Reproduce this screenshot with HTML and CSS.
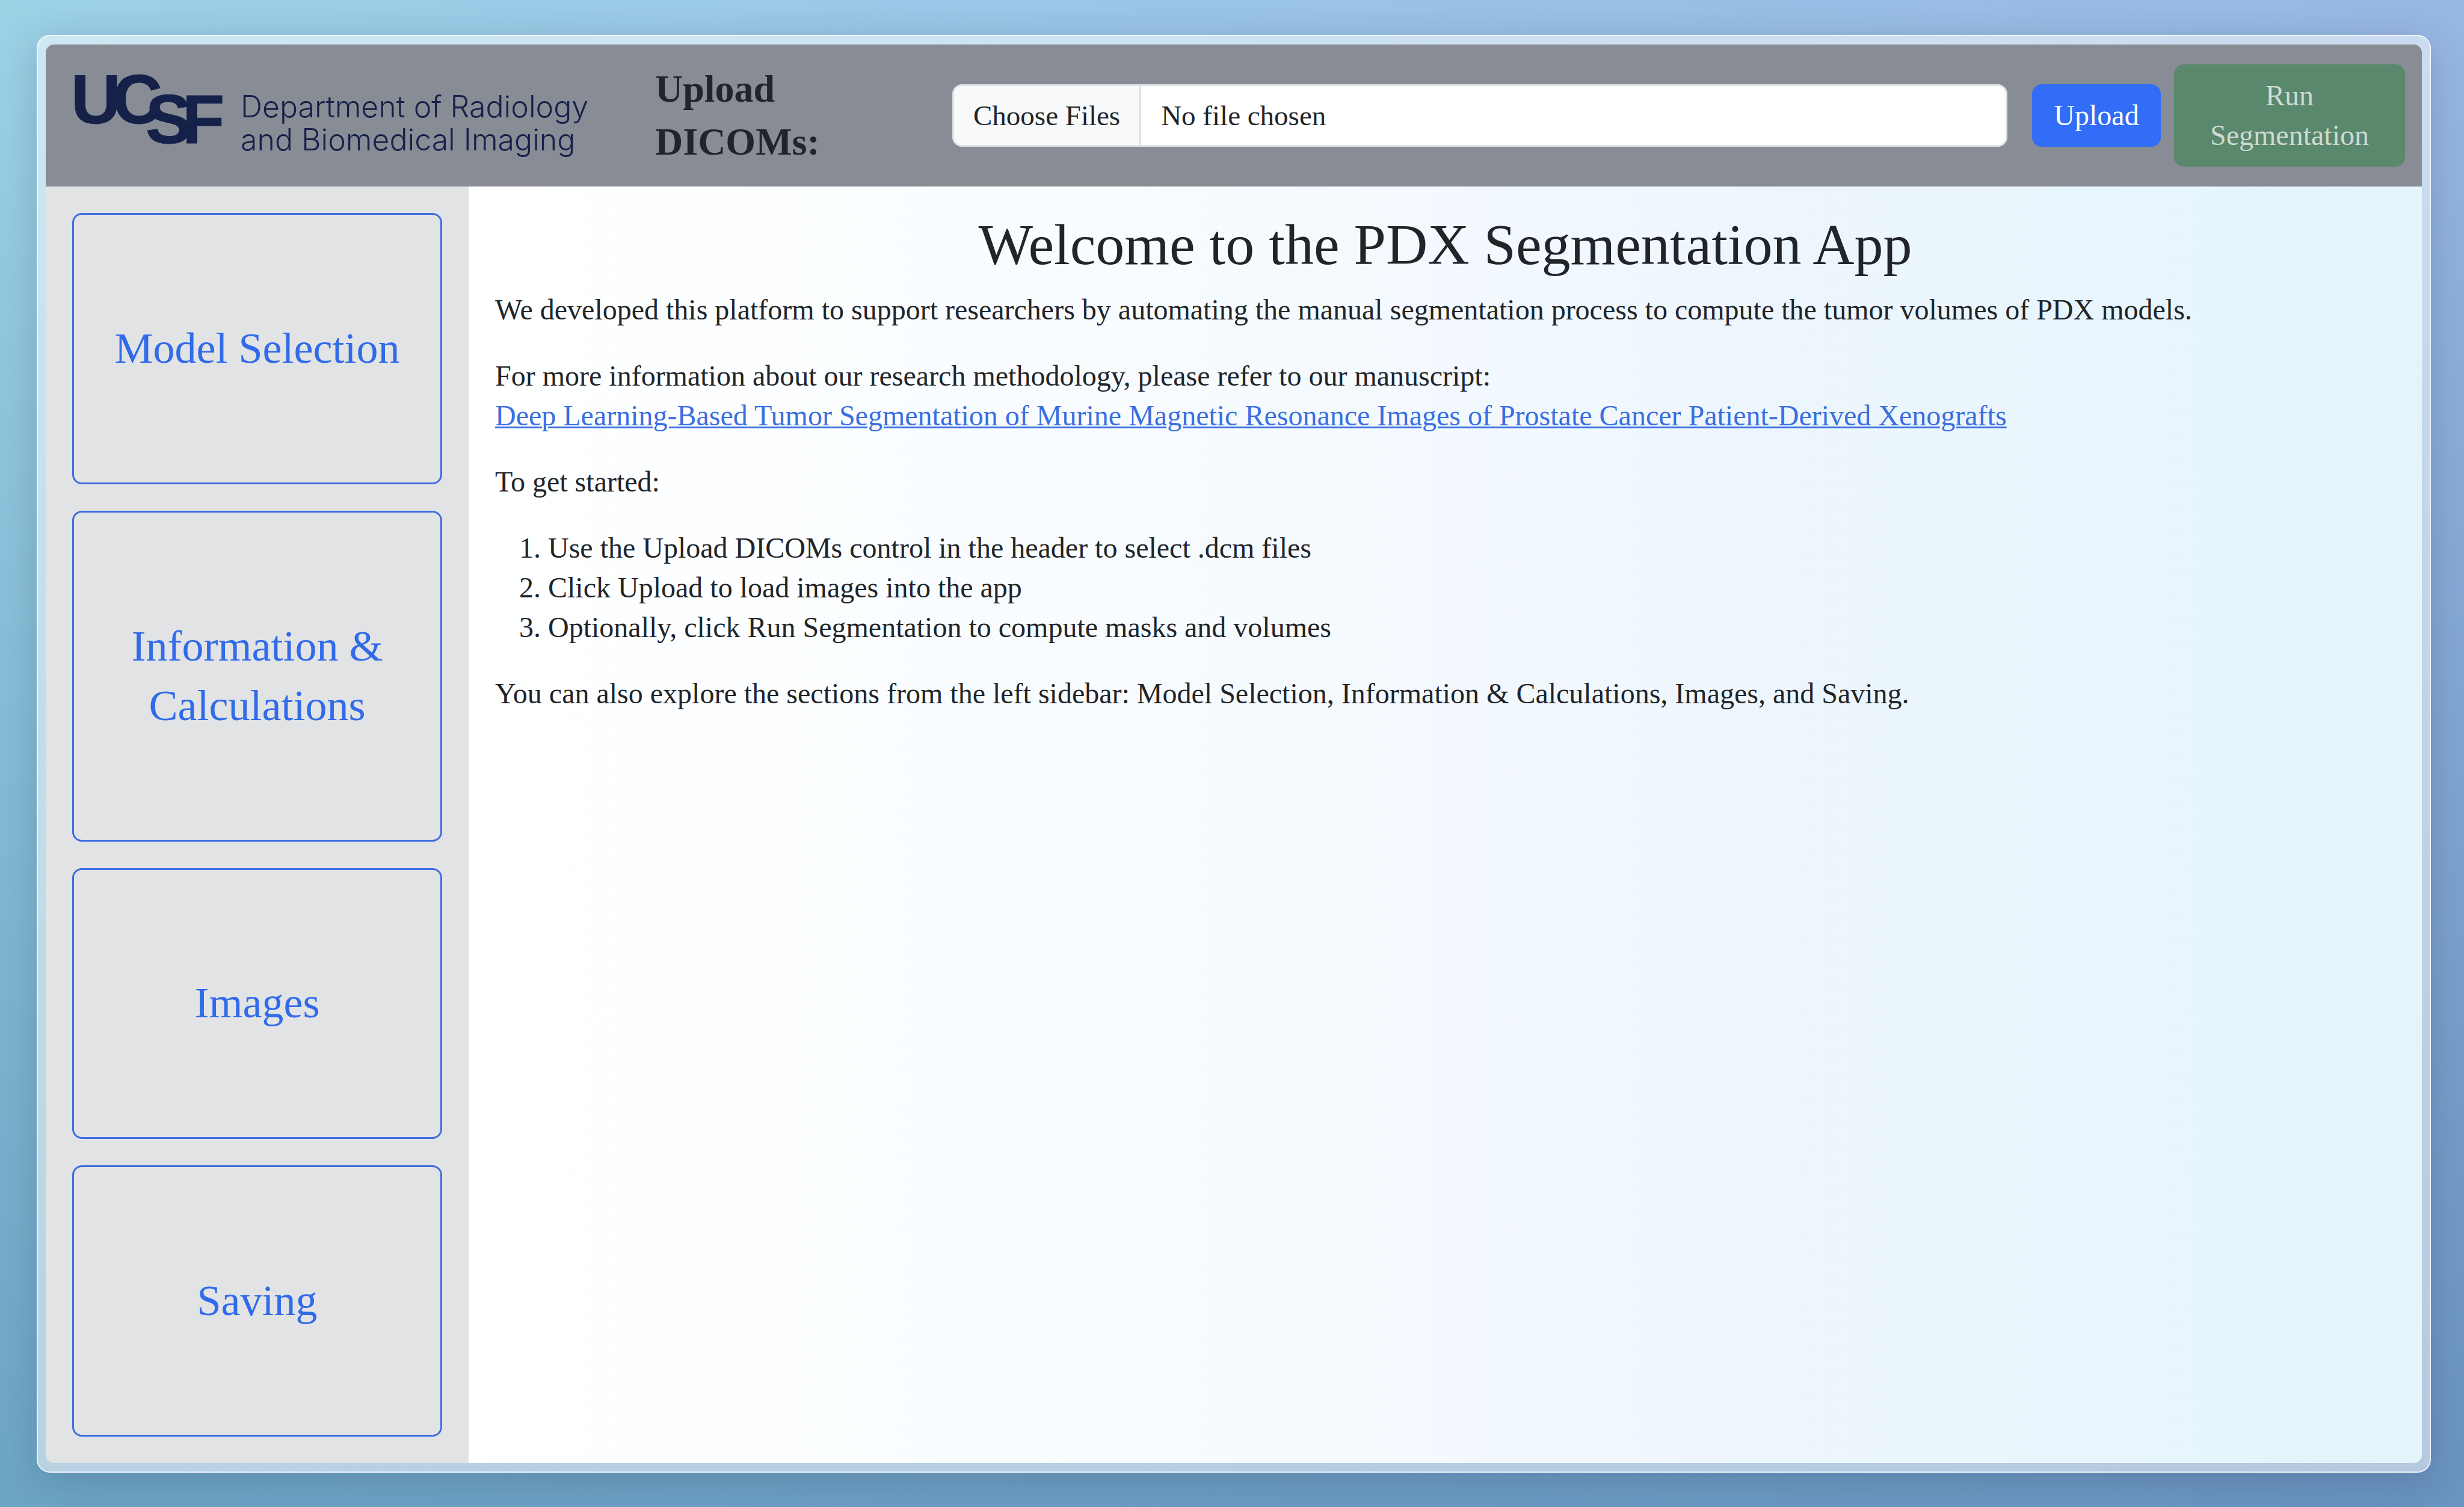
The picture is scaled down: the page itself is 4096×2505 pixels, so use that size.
FILE: index.html
```html
<!DOCTYPE html>
<html lang="en">
<head>
<meta charset="utf-8">
<title>PDX Segmentation App</title>
<link rel="stylesheet" href="styles.css">
</head>
<body>
<div class="frame">
  <div class="app">
    <header class="header">
      <svg class="logo" viewBox="-12 0 937 170" role="img" aria-label="UCSF Department of Radiology and Biomedical Imaging">
        <g class="logo-mark">
          <text x="-2" y="98">U</text>
          <text x="67" y="98">C</text>
          <text x="122" y="131">S</text>
          <text x="183" y="131">F</text>
        </g>
        <g class="logo-name">
          <text x="280" y="88">Department of Radiology</text>
          <text x="280" y="143">and Biomedical Imaging</text>
        </g>
      </svg>
      <form class="upload">
        <label class="upload-label" for="dicoms">Upload DICOMs:</label>
        <input class="upload-input" id="dicoms" type="file" multiple>
        <div class="actions">
          <button class="btn btn-primary" type="button">Upload</button>
          <button class="btn btn-success" type="button" disabled>Run Segmentation</button>
        </div>
      </form>
    </header>
    <nav class="sidebar">
      <button class="nav-btn" type="button">Model Selection</button>
      <button class="nav-btn" type="button">Information &amp; Calculations</button>
      <button class="nav-btn" type="button">Images</button>
      <button class="nav-btn" type="button">Saving</button>
    </nav>
    <main class="content">
      <h1>Welcome to the PDX Segmentation App</h1>
      <p>We developed this platform to support researchers by automating the manual segmentation process to compute the tumor volumes of PDX models.</p>
      <p>For more information about our research methodology, please refer to our manuscript:<br>
      <a href="#manuscript">Deep Learning-Based Tumor Segmentation of Murine Magnetic Resonance Images of Prostate Cancer Patient-Derived Xenografts</a></p>
      <p>To get started:</p>
      <ol>
        <li>Use the Upload DICOMs control in the header to select .dcm files</li>
        <li>Click Upload to load images into the app</li>
        <li>Optionally, click Run Segmentation to compute masks and volumes</li>
      </ol>
      <p>You can also explore the sections from the left sidebar: Model Selection, Information &amp; Calculations, Images, and Saving.</p>
    </main>
  </div>
</div>
</body>
</html>
```
FILE: styles.css
```css
* {
  box-sizing: border-box;
}

body {
  margin: 0;
  min-height: 100vh;
  display: flex;
  padding: 58px 55px 57px 61px;
  font-family: Georgia, "Liberation Serif", serif;
  font-size: 48px;
  line-height: 66px;
  color: #212529;
  background:
    linear-gradient(to bottom, rgba(0, 75, 115, 0), rgba(0, 75, 115, 0.3)),
    linear-gradient(110deg, #9cd2e6, #9bc8e8 30%, #97b2e2);
}

.frame {
  flex: 1;
  display: flex;
  padding: 14px 13px;
  border: 2px solid rgba(255, 255, 255, 0.7);
  border-radius: 22px;
  background: rgba(255, 255, 255, 0.5);
  box-shadow: 0 12px 64px rgba(31, 38, 60, 0.2);
}

.app {
  flex: 1;
  display: grid;
  grid-template-columns: 703px 1fr;
  grid-template-rows: auto 1fr;
  border-radius: 14px;
  overflow: hidden;
}

.header {
  grid-column: 1 / -1;
  display: flex;
  align-items: center;
  gap: 44px;
  padding: 30px 28px 30px 32px;
  background: #888c95;
}

.logo {
  flex: none;
  width: 937px;
  height: 170px;
  fill: #16214a;
}

.logo-mark {
  font: bold 115px "Liberation Sans", Arial, sans-serif;
  stroke: #16214a;
  stroke-width: 1px;
}

.logo-name {
  font: 300 50px Inter, "Liberation Sans", sans-serif;
}

.upload {
  flex: 1;
  display: flex;
  align-items: center;
}

.upload-label {
  width: 450px;
  margin-right: 44px;
  padding-right: 120px;
  font-size: 64px;
  line-height: 88px;
  font-weight: bold;
}

.upload-input {
  flex: 1;
  min-width: 0;
  height: 104px;
  padding: 16px 33px;
  border: 3px solid #dee2e6;
  border-radius: 16px;
  background: #fff;
  color: #212529;
  font: inherit;
  font-size: 47px;
  overflow: hidden;
}

.upload-input::file-selector-button {
  height: 104px;
  margin: -19px 33px -19px -33px;
  padding: 0 32px;
  border: 0 solid #dee2e6;
  border-right-width: 3px;
  background: #f8f9fa;
  color: #212529;
  font: inherit;
}

.actions {
  display: flex;
  align-items: center;
  gap: 22px;
  margin-left: 41px;
}

.btn {
  border: 0;
  border-radius: 16px;
  padding: 19px 36px;
  font: inherit;
  color: #fff;
}

.btn-primary {
  width: 214px;
  background: #316df6;
}

.btn-success {
  width: 384px;
  background: #5a886c;
  color: #cfd9d3;
}

.sidebar {
  display: flex;
  flex-direction: column;
  gap: 44px;
  padding: 44px;
  background: #e1e3e5;
}

.nav-btn {
  flex: 1 1 auto;
  padding: 16px 33px;
  border: 3px solid #3e6de0;
  border-radius: 16px;
  background: transparent;
  color: #316bea;
  font: inherit;
  font-size: 72px;
  line-height: 99px;
}

.content {
  padding: 44px;
  background: linear-gradient(to right, #fff, #f8fcff 33%, #eef6fd 66%, #e3f4fb);
}

h1 {
  margin: 0 0 22px;
  font-size: 96px;
  line-height: 106px;
  font-weight: normal;
  text-align: center;
}

p,
ol {
  margin: 0 0 44px;
}

ol {
  padding-left: 88px;
}

a {
  color: #3a6fe0;
  text-decoration-thickness: 3px;
}
```
